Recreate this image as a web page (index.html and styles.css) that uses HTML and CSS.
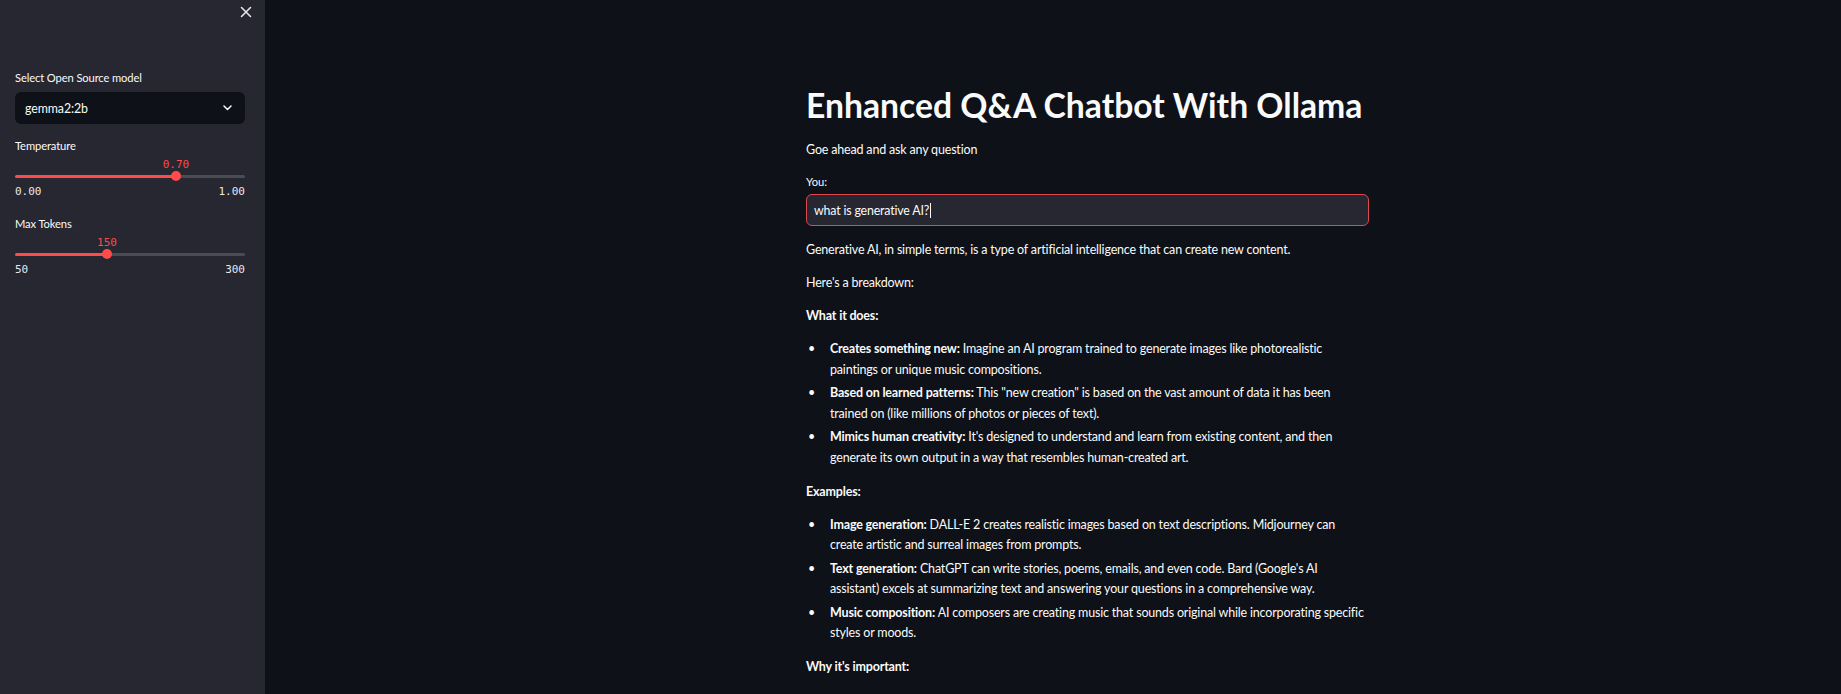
FILE: index.html
```html
<!DOCTYPE html>
<html lang="en">
<head>
<meta charset="utf-8">
<title>Enhanced Q&amp;A Chatbot With Ollama</title>
<link rel="stylesheet" href="styles.css">
</head>
<body>
<div class="app">
  <aside class="sidebar">
    <div class="sb-head">
      <button class="close" aria-label="Close sidebar">
        <svg width="12" height="12" viewBox="0 0 12 12"><path d="M1.5 1.5 L10.5 10.5 M10.5 1.5 L1.5 10.5" stroke="#e6e6ea" stroke-width="1.6" stroke-linecap="round" fill="none"/></svg>
      </button>
    </div>
    <div class="sb-body">
      <div class="wlabel sel-label">Select Open Source model</div>
      <div class="select">
        <span>gemma2:2b</span>
        <svg width="9" height="6" viewBox="0 0 9 6"><path d="M1 1 L4.5 4.5 L8 1" stroke="#fafafa" stroke-width="1.5" fill="none" stroke-linecap="round" stroke-linejoin="round"/></svg>
      </div>

      <div class="slider">
        <div class="wlabel">Temperature</div>
        <div class="s-value-row"><span class="s-value" style="margin-left:70%">0.70</span></div>
        <div class="track">
          <div class="fill" style="width:70%"></div>
          <div class="thumb"></div>
          <div class="rest"></div>
        </div>
        <div class="ticks"><span>0.00</span><span>1.00</span></div>
      </div>

      <div class="slider">
        <div class="wlabel">Max Tokens</div>
        <div class="s-value-row"><span class="s-value" style="margin-left:40%">150</span></div>
        <div class="track">
          <div class="fill" style="width:40%"></div>
          <div class="thumb"></div>
          <div class="rest"></div>
        </div>
        <div class="ticks"><span>50</span><span>300</span></div>
      </div>
    </div>
  </aside>

  <main class="main">
    <div class="content">
      <h1 class="title">Enhanced Q&amp;A Chatbot With Ollama</h1>
      <p class="lead">Goe ahead and ask any question</p>
      <div class="field-label">You:</div>
      <div class="input"><span>what is generative AI?</span><span class="caret"></span></div>

      <div class="answer">
        <p>Generative AI, in simple terms, is a type of artificial intelligence that can create new content.</p>
        <p>Here's a breakdown:</p>
        <p><strong>What it does:</strong></p>
        <ul>
          <li><span class="txt"><strong>Creates something new:</strong> Imagine an AI program trained to generate images like photorealistic paintings or unique music compositions.</span></li>
          <li><span class="txt"><strong>Based on learned patterns:</strong> This "new creation" is based on the vast amount of data it has been trained on (like millions of photos or pieces of text).</span></li>
          <li><span class="txt"><strong>Mimics human creativity:</strong> It's designed to understand and learn from existing content, and then generate its own output in a way that resembles human-created art.</span></li>
        </ul>
        <p><strong>Examples:</strong></p>
        <ul>
          <li><span class="txt"><strong>Image generation:</strong> DALL-E 2 creates realistic images based on text descriptions. Midjourney can create artistic and surreal images from prompts.</span></li>
          <li><span class="txt"><strong>Text generation:</strong> ChatGPT can write stories, poems, emails, and even code. Bard (Google's AI assistant) excels at summarizing text and answering your questions in a comprehensive way.</span></li>
          <li><span class="txt"><strong>Music composition:</strong> AI composers are creating music that sounds original while incorporating specific styles or moods.</span></li>
        </ul>
        <p><strong>Why it's important:</strong></p>
        <ul>
          <li><span class="txt"><strong>Boosts creativity:</strong> It helps artists, writers and musicians explore new ideas quickly.</span></li>
        </ul>
      </div>
    </div>
  </main>
</div>
</body>
</html>
```
FILE: styles.css
```css
html, body {
  margin: 0;
  padding: 0;
  height: 694px;
  overflow: hidden;
  background: #0e1117;
  color: #fafafa;
  font-family: Lato, "Noto Sans", sans-serif;
}

.app {
  display: flex;
  height: 694px;
}

/* ---------- Sidebar ---------- */
.sidebar {
  width: 265px;
  flex: none;
  box-sizing: border-box;
  background: #262730;
  padding: 0 20px 0 15px;
}

.sb-head {
  height: 70px;
  display: flex;
  justify-content: flex-end;
  align-items: flex-start;
  margin-right: -20px;
  padding: 6px 13px 0 0;
  box-sizing: border-box;
}

.close {
  width: 12px;
  height: 12px;
  padding: 0;
  border: 0;
  background: none;
  display: flex;
}

.wlabel {
  font-size: 11.2px;
  letter-spacing: -0.12px;
  line-height: 16px;
  height: 16px;
  color: #fafafa;
  white-space: nowrap;
}

.sel-label {
  margin-bottom: 6px;
}

.select {
  height: 32px;
  box-sizing: border-box;
  background: #0e1117;
  border-radius: 6px;
  display: flex;
  align-items: center;
  justify-content: space-between;
  padding: 0 13px 0 10px;
  font-size: 12.4px;
  letter-spacing: -0.1px;
  margin-bottom: 14px;
}

.slider {
  margin-bottom: 15px;
}

.s-value-row {
  height: 15px;
  line-height: 15px;
  white-space: nowrap;
}

.s-value {
  display: inline-block;
  transform: translateX(-50%);
  font-family: "DejaVu Sans Mono", "Liberation Mono", monospace;
  font-size: 11px;
  color: #ff4b4b;
}

.track {
  height: 14px;
  display: flex;
  align-items: center;
}

.fill {
  height: 3px;
  background: #ff4b4b;
  border-radius: 2px 0 0 2px;
}

.rest {
  flex: 1;
  height: 3px;
  background: #4a4b54;
  border-radius: 0 2px 2px 0;
}

.thumb {
  width: 10px;
  height: 10px;
  margin: 0 -5px;
  border-radius: 50%;
  background: #ff4b4b;
  flex: none;
  position: relative;
  z-index: 1;
}

.ticks {
  height: 18px;
  line-height: 18px;
  display: flex;
  justify-content: space-between;
  font-family: "DejaVu Sans Mono", "Liberation Mono", monospace;
  font-size: 11px;
  color: #e8e8ec;
}

/* ---------- Main ---------- */
.main {
  flex: 1;
  min-width: 0;
}

.content {
  width: 563px;
  margin-left: 541px;
  padding-top: 84px;
}

.title {
  font-size: 33.7px;
  line-height: 42px;
  font-weight: 700;
  margin: 0 0 14px;
  white-space: nowrap;
}

.lead {
  font-size: 12.5px;
  letter-spacing: -0.18px;
  line-height: 20.5px;
  margin: 0 0 13.5px;
}

.field-label {
  font-size: 11.2px;
  line-height: 16px;
  margin-bottom: 4.3px;
}

.input {
  height: 32px;
  box-sizing: border-box;
  border: 1px solid #e0474f;
  border-radius: 6px;
  background: #262730;
  padding: 0 7px;
  display: flex;
  align-items: center;
  font-size: 12.4px;
  letter-spacing: -0.18px;
  margin-bottom: 13.75px;
}

.caret {
  width: 1px;
  height: 15px;
  background: #fafafa;
  margin-left: 1px;
}

.answer {
  font-size: 12.5px;
  letter-spacing: -0.18px;
  line-height: 20.5px;
}

.answer p {
  margin: 0 0 12.5px;
}

.answer strong {
  font-weight: 700;
}

.answer ul {
  list-style: none;
  margin: 0 0 13.5px;
  padding: 0;
}

.answer li {
  display: flex;
}

.answer li + li {
  margin-top: 3px;
}

.answer li::before {
  content: "•";
  flex: none;
  width: 24px;
  padding-left: 2px;
  box-sizing: border-box;
}

.txt {
  flex: 1;
}
```
